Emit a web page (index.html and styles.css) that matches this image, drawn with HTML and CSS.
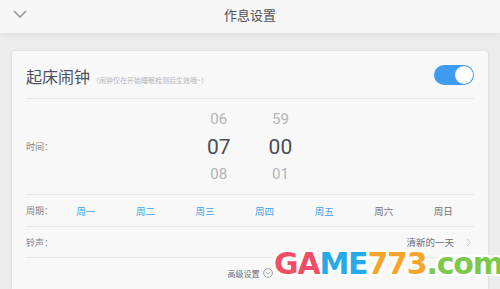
FILE: index.html
```html
<!DOCTYPE html>
<html lang="zh-CN">
<head>
  <meta charset="UTF-8" />
  <title>作息设置</title>
  <link rel="stylesheet" href="styles.css">
</head>
<body>
  <header class="topbar">
    <svg class="back" width="14" height="8" viewBox="0 0 14 8"><path d="M1 1 L7 7 L13 1" fill="none" stroke="#8a8d96" stroke-width="1.3"/></svg>
    <h1>作息设置</h1>
  </header>

  <main class="page">
    <section class="card">
      <div class="card-head">
        <div class="title">起床闹钟<span class="hint">（闹钟仅在开始睡眠检测后生效哦~）</span></div>
        <div class="switch on"><span class="knob"></span></div>
      </div>

      <div class="row time-row">
        <span class="label">时间：</span>
        <div class="picker">
          <div class="col">
            <span class="dim">06</span>
            <span class="cur">07</span>
            <span class="dim">08</span>
          </div>
          <div class="col">
            <span class="dim">59</span>
            <span class="cur">00</span>
            <span class="dim">01</span>
          </div>
        </div>
      </div>

      <div class="row week-row">
        <span class="label short">周期：</span>
        <div class="days">
          <span class="day active">周一</span>
          <span class="day active">周二</span>
          <span class="day active">周三</span>
          <span class="day active">周四</span>
          <span class="day active">周五</span>
          <span class="day">周六</span>
          <span class="day">周日</span>
        </div>
      </div>

      <div class="row ring-row">
        <span class="label">铃声：</span>
        <span class="ring">清新的一天<svg width="6" height="9" viewBox="0 0 6 9"><path d="M1 1 L4.5 4.5 L1 8" fill="none" stroke="#c4c6cc" stroke-width="1"/></svg></span>
      </div>

      <div class="more">高级设置<svg width="10" height="10" viewBox="0 0 10 10"><circle cx="5" cy="5" r="4.4" fill="none" stroke="#8a8d96" stroke-width="0.8"/><path d="M3 4.2 L5 6.2 L7 4.2" fill="none" stroke="#8a8d96" stroke-width="0.8"/></svg></div>
    </section>
  </main>

  <div class="watermark"><span class="r">GA</span><span class="b">ME</span><span class="o">773</span><span class="g">.com</span></div>
</body>
</html>
```

FILE: styles.css
```css
* {
  box-sizing: border-box;
}

body {
  margin: 0;
  width: 500px;
  height: 289px;
  overflow: hidden;
  background: #ececec;
  font-family: "Noto Sans CJK SC", "Noto Sans", sans-serif;
  color: #777a82;
  position: relative;
}

.topbar {
  height: 33px;
  background: #f7f7f7;
  display: flex;
  justify-content: center;
  padding-top: 5px;
  position: relative;
  box-shadow: 0 2px 6px rgba(0, 0, 0, 0.06);
}

.topbar h1 {
  margin: 0;
  font-size: 13px;
  line-height: 20px;
  font-weight: 400;
  color: #4f525a;
}

.back {
  position: absolute;
  left: 13px;
  top: 10px;
}

.page {
  padding: 18px 12px 0 12px;
}

.card {
  background: #f8f8f8;
  border-radius: 3px;
  box-shadow: 0 0 3px rgba(0, 0, 0, 0.12);
  padding: 0 14px;
  height: 240px;
}

.card-head {
  height: 48px;
  display: flex;
  align-items: center;
  justify-content: space-between;
  border-bottom: 1px solid #e8e8e8;
}

.title {
  font-size: 16px;
  color: #4c505c;
  display: flex;
  align-items: baseline;
  margin-top: 2px;
}

.hint {
  font-size: 7px;
  color: #b3b5ba;
  margin-left: 2px;
}

.switch {
  width: 40px;
  height: 20px;
  border-radius: 10px;
  background: #3e9bf0;
  position: relative;
}

.knob {
  position: absolute;
  right: 1px;
  top: 1px;
  width: 18px;
  height: 18px;
  border-radius: 50%;
  background: #fff;
}

.row {
  display: flex;
  align-items: center;
  border-bottom: 1px solid #e8e8e8;
}

.label {
  font-size: 9px;
  color: #7d8088;
  width: 48px;
}

.label.short {
  width: 30px;
}

.time-row {
  height: 96px;
}

.picker {
  display: flex;
  gap: 38px;
  margin-left: 133px;
}

.col {
  display: flex;
  flex-direction: column;
  align-items: center;
  font-family: Roboto, "Noto Sans", sans-serif;
}

.col .dim {
  font-size: 15px;
  color: #b2b4b9;
  line-height: 27px;
}

.col .cur {
  font-size: 21px;
  color: #4a4e5a;
  line-height: 28px;
}

.week-row {
  height: 32px;
}

.days {
  display: flex;
}

.day {
  width: 59.6px;
  text-align: center;
  font-size: 9.5px;
  color: #6c6f77;
}

.day.active {
  color: #3fa2ec;
}

.ring-row {
  height: 31px;
  justify-content: space-between;
}

.ring {
  font-size: 9.5px;
  color: #6c6f77;
  display: flex;
  align-items: center;
  gap: 12px;
  margin-right: 2px;
}

.more {
  display: flex;
  align-items: center;
  justify-content: center;
  gap: 3px;
  height: 30px;
  font-size: 8px;
  color: #6c6f77;
}

.watermark {
  position: absolute;
  left: 274px;
  top: 246px;
  font-family: "DejaVu Sans", sans-serif;
  font-weight: 900;
  font-size: 30px;
  letter-spacing: -1.2px;
  line-height: 36px;
  text-shadow: 2px 0 0 #fff, -2px 0 0 #fff, 0 2px 0 #fff, 0 -2px 0 #fff, 2px 2px 0 #fff, -2px -2px 0 #fff, 2px -2px 0 #fff, -2px 2px 0 #fff;
}

.watermark .r { color: #ee4f64; }
.watermark .b { color: #27a9ea; }
.watermark .o { color: #f6a52c; }
.watermark .g { color: #7cc84a; }
```
